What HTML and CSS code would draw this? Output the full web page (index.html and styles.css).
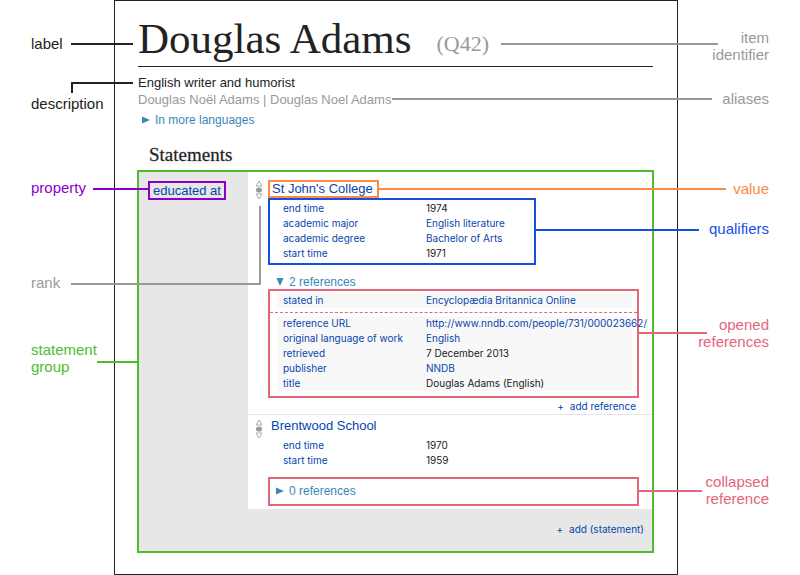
FILE: index.html
```html
<!DOCTYPE html>
<html lang="en">
<head>
<meta charset="utf-8">
<title>Wikidata item structure</title>
<link rel="stylesheet" href="styles.css">
</head>
<body>
<div class="diagram">
  <aside class="notes notes-left">
    <p class="note ink">label</p>
    <p class="note ink">description</p>
    <p class="note purple">property</p>
    <p class="note grey">rank</p>
    <p class="note green">statement<br>group</p>
  </aside>

  <main class="item">
    <header class="heading">
      <h1>Douglas Adams</h1>
      <span class="qid">(Q42)</span>
    </header>
    <p class="description">English writer and humorist</p>
    <p class="aliases">Douglas Noël Adams | Douglas Noel Adams</p>
    <button class="toggle languages" type="button"><svg class="tri" viewBox="0 0 8 8"><path d="M0 0.500L8 4L0 7.500Z"/></svg>In more languages</button>

    <h2>Statements</h2>
    <section class="group">
      <div class="property-cell"><a class="property" href="#p69">educated at</a></div>
      <div class="statements">
        <article class="statement">
          <svg class="rank" viewBox="0 0 8 20"><path d="M4 1L7 6H1ZM4 19L7 14H1Z"/><ellipse cx="4" cy="10" rx="3" ry="2.600"/></svg>
          <div class="claim">
            <a class="value boxed" href="#college">St John's College</a>
            <table class="facts qualifiers">
              <tr><th><a href="#p">end time</a></th><td>1974</td></tr>
              <tr><th><a href="#p">academic major</a></th><td><a href="#v">English literature</a></td></tr>
              <tr><th><a href="#p">academic degree</a></th><td><a href="#v">Bachelor of Arts</a></td></tr>
              <tr><th><a href="#p">start time</a></th><td>1971</td></tr>
            </table>
            <button class="toggle opened" type="button"><svg class="tri" viewBox="0 0 8 8"><path d="M0.500 0H7.500L4 8Z"/></svg>2 references</button>
            <div class="references">
              <div class="reference">
                <table class="facts">
                  <tr><th><a href="#p">stated in</a></th><td><a href="#v">Encyclopædia Britannica Online</a></td></tr>
                </table>
              </div>
              <div class="reference">
                <table class="facts">
                  <tr><th><a href="#p">reference URL</a></th><td><a href="#v">http://www.nndb.com/people/731/000023662/</a></td></tr>
                  <tr><th><a href="#p">original language of work</a></th><td><a href="#v">English</a></td></tr>
                  <tr><th><a href="#p">retrieved</a></th><td>7 December 2013</td></tr>
                  <tr><th><a href="#p">publisher</a></th><td><a href="#v">NNDB</a></td></tr>
                  <tr><th><a href="#p">title</a></th><td>Douglas Adams (English)</td></tr>
                </table>
              </div>
            </div>
            <button class="add add-reference" type="button"><span>+</span>add reference</button>
          </div>
        </article>
        <article class="statement">
          <svg class="rank" viewBox="0 0 8 20"><path d="M4 1L7 6H1ZM4 19L7 14H1Z"/><ellipse cx="4" cy="10" rx="3" ry="2.600"/></svg>
          <div class="claim">
            <a class="value" href="#school">Brentwood School</a>
            <table class="facts plain">
              <tr><th><a href="#p">end time</a></th><td>1970</td></tr>
              <tr><th><a href="#p">start time</a></th><td>1959</td></tr>
            </table>
            <div class="collapsed"><button class="toggle" type="button"><svg class="tri" viewBox="0 0 8 8"><path d="M0 0.500L8 4L0 7.500Z"/></svg>0 references</button></div>
          </div>
        </article>
      </div>
      <div class="group-footer"><button class="add" type="button"><span>+</span>add (statement)</button></div>
    </section>
  </main>

  <aside class="notes notes-right">
    <p class="note grey">item<br>identifier</p>
    <p class="note grey">aliases</p>
    <p class="note orange">value</p>
    <p class="note blue">qualifiers</p>
    <p class="note pink">opened<br>references</p>
    <p class="note pink">collapsed<br>reference</p>
  </aside>

  <i class="line ink l-label"></i>
  <i class="line ink l-description"></i>
  <i class="line ink down l-description-drop"></i>
  <i class="line purple l-property"></i>
  <i class="line grey l-rank"></i>
  <i class="line grey down l-rank-rise"></i>
  <i class="line green l-group"></i>
  <i class="line grey l-identifier"></i>
  <i class="line grey l-aliases"></i>
  <i class="line orange l-value"></i>
  <i class="line blue l-qualifiers"></i>
  <i class="line pink l-opened"></i>
  <i class="line pink l-collapsed"></i>
</div>
</body>
</html>
```
FILE: styles.css
```css
* { box-sizing: border-box; }

body {
  margin: 0;
  background: #fff;
  color: #222;
  font-family: "Liberation Sans", Arial, sans-serif;
  font-size: 13px;
}

h1, h2, p { margin: 0; font-weight: 400; }
a { color: #0645ad; text-decoration: none; }
button { border: 0; padding: 0; background: none; font: inherit; cursor: pointer; }

.ink { color: #222; }
.grey { color: #999; }
.purple { color: #8b00c9; }
.green { color: #4dbd2d; }
.orange { color: #ff8844; }
.blue { color: #1450e6; }
.pink { color: #e4657c; }

.diagram {
  position: relative;
  display: grid;
  grid-template-columns: 114px minmax(0, 1fr) 122px;
}

/* Side notes */
.notes { display: grid; align-content: start; }
.notes-left { padding: 35px 0 0 31px; grid-template-rows: 60px 84px 95px 67px auto; }
.notes-right { padding: 29px 31px 0 0; grid-template-rows: 61px 90px 40px 96px 157px auto; text-align: right; }
.note { font-size: 15px; line-height: 17px; }

/* Item page */
.item { border: 1px solid #222; padding: 16px 24px 21px 23px; }
.heading { display: flex; align-items: flex-start; gap: 25px; height: 50px; border-bottom: 1px solid #222; }
h1, h2, .qid { font-family: "Liberation Serif", "Times New Roman", serif; }
h1 { font-size: 43px; line-height: 44px; }
.qid { margin-top: 15px; font-size: 22px; line-height: 24px; color: #999; }
.description { margin-top: 7px; line-height: 17px; }
.aliases { line-height: 17px; color: #999; }
.toggle { display: flex; align-items: center; gap: 5px; line-height: 16px; color: #3a87b5; font-size: 12px; }
.tri { width: 8px; height: 8px; fill: #3a87b5; }
.languages { margin: 4px 0 0 4px; }
h2 { margin: 16px 0 4px 11px; font-size: 19px; line-height: 22px; -webkit-text-stroke: 1px rgba(34, 34, 34, 0.25); }

/* Statement group */
.group {
  display: grid;
  grid-template-columns: 109px minmax(0, 1fr);
  margin: 0 -1px;
  border: 2px solid #4dbd2d;
  background: #e7e7e7;
}
.property-cell { padding: 9px 0 0 9px; }
.property { display: table; border: 2px solid #8b00c9; padding: 1px 3px 0; font-size: 13px; line-height: 14px; }
.statements { background: #fff; }
.statement { display: grid; grid-template-columns: 20px minmax(0, 1fr); padding-right: 13px; }
.statement + .statement { border-top: 1px solid #e7e7e7; }
.rank { width: 8px; height: 20px; margin: 8px 0 0 7px; fill: none; stroke: #aaa; stroke-width: 1; }
.statement + .statement .rank { margin-top: 4px; }
.rank ellipse { fill: #999; stroke: none; }
.claim { padding-top: 3px; }
.value { display: table; padding-left: 3px; font-size: 13px; line-height: 16px; }
.value.boxed { margin-top: 5px; border: 2px solid #ff8844; padding: 0 4px 0 2px; line-height: 14px; }

.facts { width: 100%; border-collapse: collapse; table-layout: fixed; font-family: Inter, "Liberation Sans", sans-serif; font-size: 10px; line-height: 15px; }
.facts th { width: 149px; padding: 0 0 0 6px; text-align: left; font-weight: 400; }
.facts td { padding: 0; white-space: nowrap; }
.facts.qualifiers { display: block; width: 268px; border: 2px solid #1450e6; border-collapse: separate; border-spacing: 0; padding: 1px 0 2px 7px; }
.opened { margin: 10px 0 0 8px; line-height: 14px; }
.references { border: 2px solid #e4657c; }
.reference { padding: 2px 5px 4px 7px; }
.reference + .reference { border-top: 1px dashed #e4657c; padding: 3px 5px 5px 7px; }
.reference .facts { background: #f8f8f8; }
.add { display: flex; gap: 6px; margin-left: auto; color: #0645ad; font-family: Inter, "Liberation Sans", sans-serif; font-size: 10px; line-height: 16px; }
.add-reference { margin-right: 3px; }
.plain { margin: 4px 0 9px 9px; }
.collapsed { border: 2px solid #e4657c; padding: 4px 6px 5px; margin-bottom: 3px; }
.group-footer { grid-column: 1 / -1; padding: 12px 8px 14px; }

/* Connectors between notes and page parts */
.line { position: absolute; height: 2px; background: currentColor; }
.down { width: 2px; height: auto; }
.l-label { top: 43px; left: 71px; width: 62px; }
.l-description { top: 82px; left: 71px; width: 62px; }
.l-description-drop { top: 82px; left: 71px; height: 11px; }
.l-property { top: 188px; left: 93px; width: 56px; }
.l-rank { top: 283px; left: 71px; width: 190px; }
.l-rank-rise { top: 206px; left: 259px; height: 78px; }
.l-group { top: 361px; left: 97px; width: 41px; }
.l-identifier { top: 43px; left: 501px; right: 82px; }
.l-aliases { top: 98px; left: 392px; right: 88px; }
.l-value { top: 188px; left: 378px; right: 74px; }
.l-qualifiers { top: 229px; left: 536px; right: 101px; }
.l-opened { top: 332px; right: 93px; width: 68px; }
.l-collapsed { top: 490px; right: 98px; width: 63px; }
```
